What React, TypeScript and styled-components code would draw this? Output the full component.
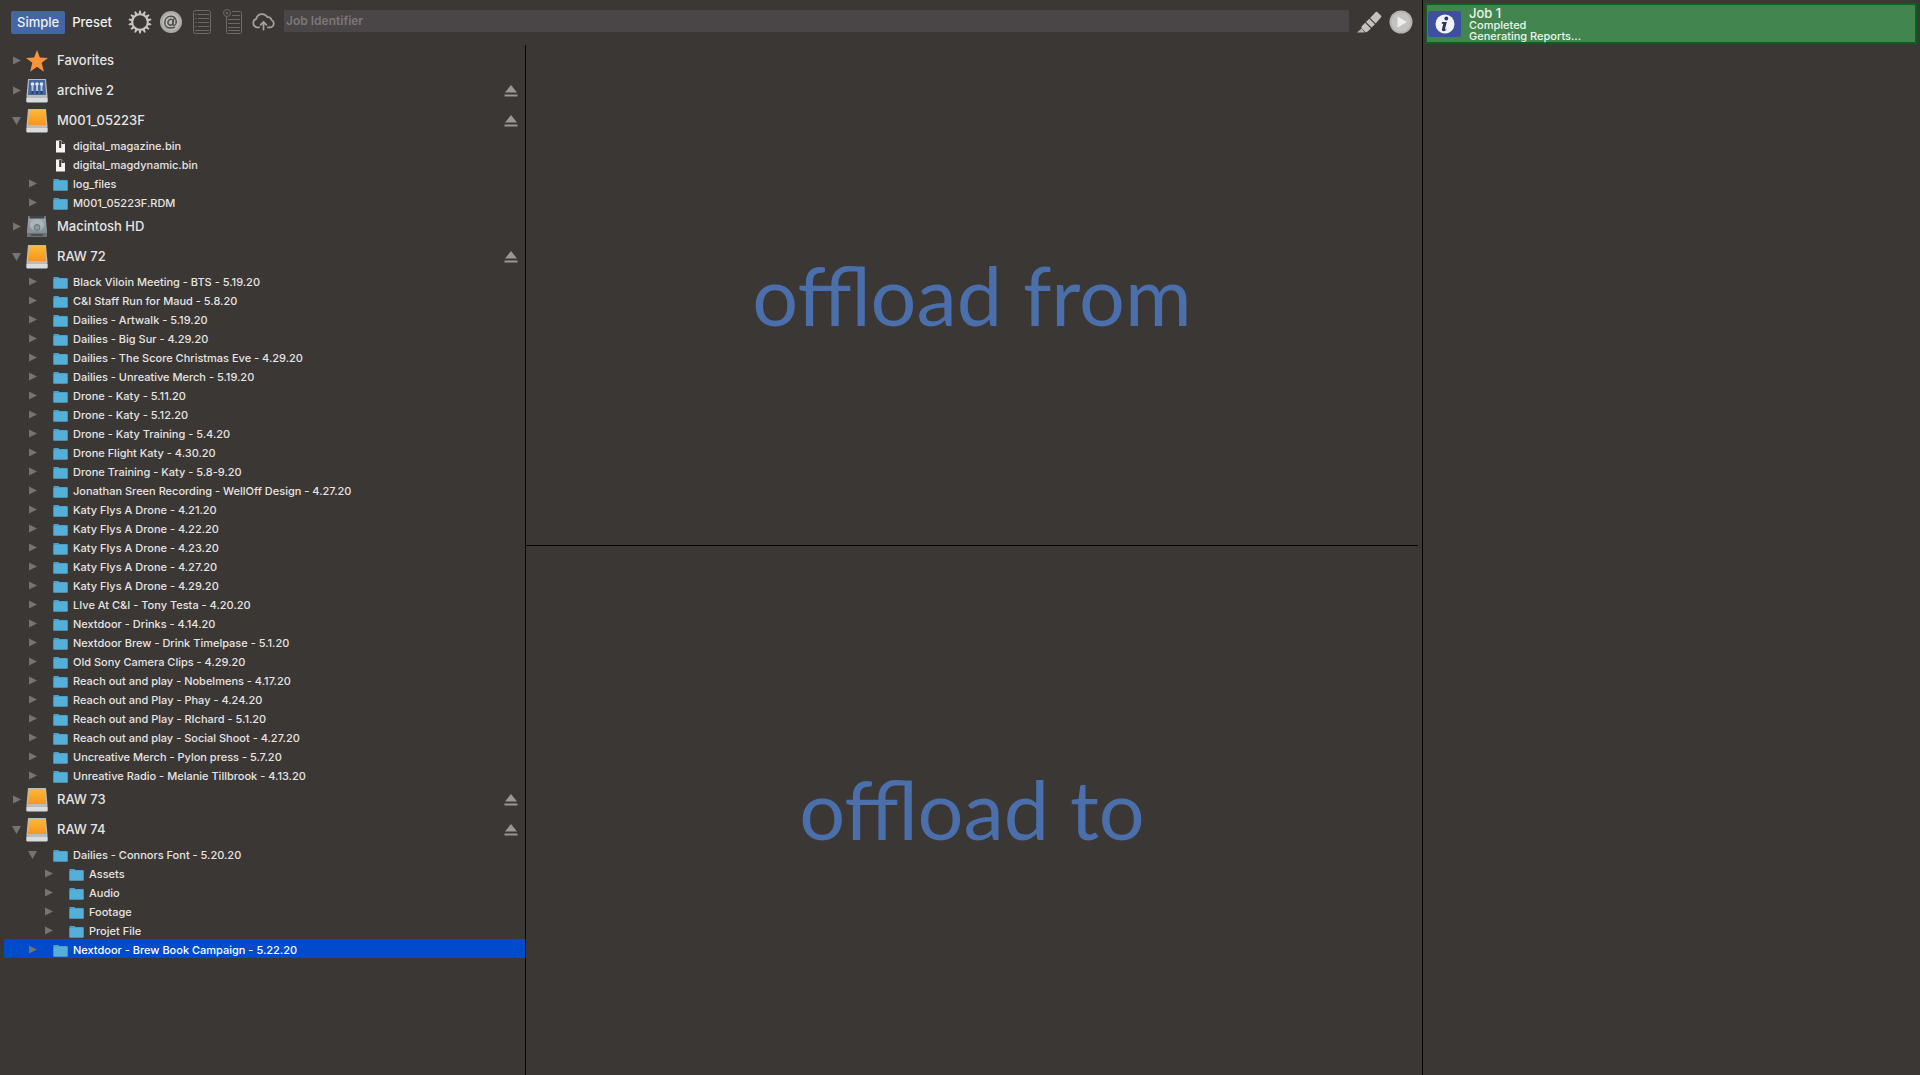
import React, { useState } from "react";
import styled, { createGlobalStyle, css } from "styled-components";

const GlobalStyle = createGlobalStyle`
  *, *::before, *::after { box-sizing: border-box; }
  html, body, #root { height: 100%; }
  body {
    margin: 0;
    background: #3b3735;
    color: #e6e4e3;
    font-family: Inter, "Liberation Sans", sans-serif;
    font-size: 11px;
  }
  button { font: inherit; color: inherit; border: 0; padding: 0; background: none; cursor: pointer; }
  ul { list-style: none; margin: 0; padding: 0; }
`;

const Window = styled.div`
  display: flex;
  min-height: 100vh;
`;

const Workspace = styled.main`
  flex: 1;
  min-width: 0;
  display: flex;
  flex-direction: column;
`;

const Toolbar = styled.header`
  display: flex;
  align-items: center;
  height: 45px;
  padding: 0 9px 1px 11px;
`;

const Tab = styled.button<{ $active?: boolean }>`
  height: 23px;
  padding: 0 7px;
  border-radius: 2px;
  font-size: 13px;
  font-weight: 500;
  line-height: 23px;
  color: #f0efee;
  ${(p) =>
    p.$active &&
    css`
      padding: 0 6px;
      background: #4466a6;
    `}
`;

const Tools = styled.div`
  display: flex;
  align-items: center;
  gap: 6px;
  margin: 0 8px;
`;

const ToolButton = styled.button`
  display: flex;
  align-items: center;
  justify-content: center;
  width: 25px;
  height: 26px;
`;

const JobInput = styled.input`
  flex: 1;
  min-width: 0;
  height: 22px;
  margin: 0 8px 2px 0;
  padding: 0 2px 2px;
  border: 0;
  border-radius: 0;
  outline: 0;
  background: #4a4647;
  color: #e6e4e3;
  font: 600 12px/20px Inter, "Liberation Sans", sans-serif;
  &::placeholder { color: #7b7778; opacity: 1; }
`;

const RunTools = styled.div`
  display: flex;
  align-items: center;
  gap: 6px;
`;

const Body = styled.div`
  flex: 1;
  display: flex;
  min-height: 0;
`;

const Sidebar = styled.nav`
  flex: none;
  width: 526px;
  padding-left: 4px;
  border-right: 1px solid #050505;
`;

const Row = styled.div<{ $depth: number; $selected?: boolean }>`
  display: flex;
  align-items: center;
  height: ${(p) => (p.$depth === 0 ? 30 : 19)}px;
  padding-top: 2px;
  padding-left: ${(p) => 7 + p.$depth * 16}px;
  padding-right: 7px;
  font-size: ${(p) => (p.$depth === 0 ? 13 : 11)}px;
  font-weight: 500;
  line-height: 16px;
  white-space: nowrap;
  ${(p) =>
    p.$selected &&
    css`
      background: #004bcb;
      color: #fff;
    `}
`;

const Disclosure = styled.button`
  display: flex;
  align-items: center;
  justify-content: center;
  width: 10px;
  height: 16px;
`;

const DisclosureSpace = styled.span`
  width: 10px;
`;

const IconCell = styled.span<{ $depth: number }>`
  display: flex;
  align-items: center;
  justify-content: center;
  width: ${(p) => (p.$depth === 0 ? 22 : 16)}px;
  margin: ${(p) => (p.$depth === 0 ? "0 9px 0 5px" : "2px 5px 0 15px")};
`;

const Label = styled.span<{ $depth: number }>`
  flex: 1;
  padding-bottom: ${(p) => (p.$depth === 0 ? 2 : 0)}px;
`;

const EjectButton = styled.button`
  display: flex;
  width: 14px;
  height: 14px;
`;

const Drops = styled.div`
  flex: 1;
  display: flex;
  flex-direction: column;
  padding-right: 4px;
`;

const DropZone = styled.section`
  flex: 1 1 0;
  display: flex;
  align-items: center;
  justify-content: center;
  & + & {
    flex-grow: 1.05;
    padding-bottom: 4px;
    border-top: 1px solid #050505;
  }
`;

const DropTitle = styled.h2`
  margin: 0;
  color: #4a6fab;
  font-family: Lato, "Open Sans", sans-serif;
  font-size: 81px;
  font-weight: 400;
  line-height: 96px;
  white-space: nowrap;
`;

const Jobs = styled.aside`
  flex: none;
  width: 498px;
  padding: 3px 3px 0 2px;
  border-left: 1px solid #050505;
`;

const JobCard = styled.article`
  display: flex;
  align-items: center;
  height: 41px;
  padding-left: 1px;
  border: 2px solid #0c5f1e;
  background: #43854f;
  color: #eaf5ea;
`;

const JobText = styled.div`
  margin-left: 8px;
  font-weight: 500;
`;

const JobName = styled.h3`
  margin: 0;
  font-size: 13px;
  font-weight: 500;
  line-height: 14px;
`;

const JobLine = styled.p`
  margin: 0;
  font-size: 11px;
  line-height: 11px;
`;

const GearIcon = () => (
  <svg width="24" height="24" viewBox="-12 -12 24 24">
    <circle r="7.8" fill="none" stroke="#c9c7c6" strokeWidth="2" />
    {Array.from({ length: 14 }, (_, i) => (
      <path key={i} d="M-1.4 -8.2L-.7 -11.6H.7L1.4 -8.2Z" fill="#c9c7c6" transform={`rotate(${(i * 360) / 14})`} />
    ))}
  </svg>
);

const AtIcon = () => (
  <svg width="24" height="24" viewBox="0 0 24 24">
    <circle cx="12" cy="12" r="11" fill="#aaa9a5" />
    <circle cx="12" cy="12" r="8.5" fill="#bdbcb8" />
    <g fill="none" stroke="#514e4c" strokeWidth="1.4" strokeLinecap="round">
      <ellipse cx="11.6" cy="12.2" rx="2.5" ry="3" transform="rotate(20 11.6 12.2)" />
      <path d="M14.8 9l-1 5.2c-.2 1.5 2 1.4 3-.2 1.500-3-.2-7.800-4.800-7.800-4 0-6.200 3-6.200 6.200 0 3.500 2.500 5.600 6 5.600 1.500 0 2.700-.3 3.700-.9" />
    </g>
  </svg>
);

const SheetIcon = () => (
  <svg width="20" height="26" viewBox="0 0 20 26" fill="none" stroke="#6d6967" strokeWidth="1">
    <rect x="1.500" y="1.500" width="17" height="23" rx="2" />
    <path d="M3 5.500h1.500M6 5.500h11M3 9.500h1.500M6 9.500h11M3 13.500h1.500M6 13.500h11M3 17.500h1.500M6 17.500h11M3 21.500h14" />
  </svg>
);

const ScrollIcon = () => (
  <svg width="20" height="26" viewBox="0 0 20 26" fill="none" stroke="#6d6967" strokeWidth="1">
    <path d="M9 2.500h8.500a1 1 0 0 1 1 1v20a1 1 0 0 1-1 1h-13a1 1 0 0 1-1-1V8" />
    <circle cx="4" cy="4" r="3.500" />
    <circle cx="4" cy="4" r="1" />
    <path d="M9 6.500h8M5 10.500h12M5 14.500h12M5 18.500h12M5 21.500h12" />
  </svg>
);

const CloudIcon = () => (
  <svg width="26" height="20" viewBox="0 0 26 20" fill="none" stroke="#a3a09f" strokeWidth="1.800" strokeLinecap="round" strokeLinejoin="round">
    <path d="M8.500 15.500H6A4.500 4.500 0 0 1 5.500 6.800 6.200 6.200 0 0 1 17 5a4 4 0 0 1 4.400 3A4 4 0 0 1 20.500 15.500H17.500" />
    <path d="M13 18V10.500M10 13l3-3.200L16 13" />
  </svg>
);

const BrushIcon = () => (
  <svg width="25" height="24" viewBox="0 0 25 24">
    <path d="M0 22.500h8L4.500 18.500z" fill="#b5b3b2" />
    <path d="M5 16l3.200-3.200 5.600 5.600-3.200 3.200c-1 .8-2 .8-2.800 0L5 18.800c-.8-1-.8-2 0-2.800z" fill="#c4c2c1" />
    <path d="M9 12l3.300-3.300 5.600 5.600-3.300 3.300z" fill="#c4c2c1" />
    <path d="M13.100 7.900L18.500 2.200c.7-.6 1.400-.6 2 0l3.400 3.400c.6.600.6 1.300 0 2l-5.200 5.900z" fill="#c4c2c1" />
  </svg>
);

const PlayIcon = () => (
  <svg width="24" height="24" viewBox="0 0 24 24">
    <circle cx="12" cy="12" r="11.500" fill="#b5b4b3" />
    <circle cx="12" cy="12" r="9.500" fill="#c3c2c1" />
    <path d="M8.500 6.500v11L18 12z" fill="#eeeded" />
  </svg>
);

const InfoIcon = () => (
  <svg width="33" height="26" viewBox="0 0 33 26">
    <rect width="33" height="26" rx="2" fill="#3f4f9f" />
    <circle cx="17" cy="13" r="9.500" fill="#f2f3f7" />
    <circle cx="18.300" cy="7.500" r="1.900" fill="#2c3566" />
    <path d="M14 11h4.800l-1.800 7c0 .8.800.5 1.800-.4-.6 1.700-1.700 2.600-3.200 2.600-1.400 0-2-.9-1.600-2.200l1.300-5.200h-1.600z" fill="#2c3566" />
  </svg>
);

const Triangle = ({ open }: { open?: boolean }) => (
  <svg width="10" height="10" viewBox="0 0 10 10" fill="#767372">
    <path d={open ? "M1 1h9L5.500 9z" : "M2 .5v8L10 4.500z"} />
  </svg>
);

const EjectIcon = () => (
  <svg width="14" height="14" viewBox="0 0 14 14" fill="#9a9796">
    <path d="M7 1l6 7.500H1z" />
    <path d="M.5 10.500h13v2H.5z" />
  </svg>
);

const StarIcon = () => (
  <svg width="24" height="24" viewBox="0 0 24 24">
    <path d="M12 0l3.100 8.200 8.900.4-6.900 5.400 2.400 9.600L12 18.400l-7.500 5.200L6.900 14 0 8.600l8.900-.4z" fill="#fb923c" />
  </svg>
);

type DriveKind = "external" | "server" | "internal";

const DriveIcon = ({ kind }: { kind: DriveKind }) => (
  <svg width="22" height="24" viewBox="0 0 22 24">
    <defs>
      <linearGradient id="driveOrange" x1="0" y1="0" x2="0" y2="1">
        <stop offset="0" stopColor="#fbb83a" />
        <stop offset="1" stopColor="#f7951d" />
      </linearGradient>
      <linearGradient id="driveSteel" x1="0" y1="0" x2="0" y2="1">
        <stop offset="0" stopColor="#9fabae" />
        <stop offset="1" stopColor="#7b878a" />
      </linearGradient>
    </defs>
    {kind === "internal" ? (
      <>
        <path d="M2.500 1h17L21 16v6H1v-6z" fill="url(#driveSteel)" />
        <path d="M3.500 1h15v2.500h-15z" fill="#3e4446" />
        <ellipse cx="11" cy="10" rx="7" ry="6" fill="#a9b5b8" />
        <circle cx="11" cy="12.500" r="3" fill="#8a979b" stroke="#66716f" />
        <path d="M1 18h20v4H1z" fill="#687376" />
        <path d="M5 20h12" stroke="#4a5153" strokeWidth="2" />
      </>
    ) : (
      <>
        <path d="M2 0h18l1.500 17v6H.5v-6z" fill="#b9bcbe" />
        <path d="M.5 19h21v3.500a1 1 0 0 1-1 1h-19a1 1 0 0 1-1-1z" fill="#d9dbdc" />
        {kind === "external" ? (
          <path d="M3 1h16l1 15H2z" fill="url(#driveOrange)" />
        ) : (
          <>
            <path d="M3 1h16l1 15H2z" fill="#46679b" />
            <path d="M6.500 15V8M11 15V8M15.500 15V8" stroke="#2b416b" strokeWidth="2" />
            <circle cx="6.500" cy="5" r="1.800" fill="#dce8f5" />
            <circle cx="11" cy="5" r="1.800" fill="#dce8f5" />
            <circle cx="15.500" cy="5" r="1.800" fill="#dce8f5" />
            <path d="M6.500 6v6M11 6v6M15.500 6v6" stroke="#b6cbe4" strokeWidth="2" />
          </>
        )}
      </>
    )}
  </svg>
);

const FolderIcon = () => (
  <svg width="15" height="13" viewBox="0 0 15 13">
    <path d="M.5 1h5L6.500 2h8v10.500H.5z" fill="#4b9fc8" />
    <path d="M.5 3h14v9.500H.5z" fill="#55b0d9" />
  </svg>
);

const FileIcon = () => (
  <svg width="11" height="13" viewBox="0 0 11 13">
    <path d="M1 .5h5.500L10 4v8.500H1z" fill="#f4f4f4" />
    <path d="M6.500 .5V4H10z" fill="#3b3735" />
    <path d="M4.200 1h2v7h-2z" fill="#3b3735" />
  </svg>
);

type Kind = DriveKind | "star" | "folder" | "file";

interface Node {
  name: string;
  kind: Kind;
  eject?: boolean;
  open?: boolean;
  selected?: boolean;
  children?: Node[];
}

const folder = (name: string): Node => ({ name, kind: "folder" });

const TREE: Node[] = [
  { name: "Favorites", kind: "star" },
  { name: "archive 2", kind: "server", eject: true },
  {
    name: "M001_05223F",
    kind: "external",
    eject: true,
    open: true,
    children: [
      { name: "digital_magazine.bin", kind: "file" },
      { name: "digital_magdynamic.bin", kind: "file" },
      folder("log_files"),
      folder("M001_05223F.RDM"),
    ],
  },
  { name: "Macintosh HD", kind: "internal" },
  {
    name: "RAW 72",
    kind: "external",
    eject: true,
    open: true,
    children: [
      "Black Viloin Meeting - BTS - 5.19.20",
      "C&I Staff Run for Maud - 5.8.20",
      "Dailies - Artwalk - 5.19.20",
      "Dailies - Big Sur - 4.29.20",
      "Dailies - The Score Christmas Eve - 4.29.20",
      "Dailies - Unreative Merch - 5.19.20",
      "Drone - Katy - 5.11.20",
      "Drone - Katy - 5.12.20",
      "Drone - Katy Training - 5.4.20",
      "Drone Flight Katy - 4.30.20",
      "Drone Training - Katy - 5.8-9.20",
      "Jonathan Sreen Recording - WellOff Design - 4.27.20",
      "Katy Flys A Drone - 4.21.20",
      "Katy Flys A Drone - 4.22.20",
      "Katy Flys A Drone - 4.23.20",
      "Katy Flys A Drone - 4.27.20",
      "Katy Flys A Drone - 4.29.20",
      "LIve At C&I - Tony Testa - 4.20.20",
      "Nextdoor - Drinks - 4.14.20",
      "Nextdoor Brew - Drink Timelpase - 5.1.20",
      "Old Sony Camera Clips - 4.29.20",
      "Reach out and play - Nobelmens - 4.17.20",
      "Reach out and Play - Phay - 4.24.20",
      "Reach out and Play - RIchard - 5.1.20",
      "Reach out and play - Social Shoot - 4.27.20",
      "Uncreative Merch - Pylon press - 5.7.20",
      "Unreative Radio - Melanie Tillbrook - 4.13.20",
    ].map(folder),
  },
  { name: "RAW 73", kind: "external", eject: true },
  {
    name: "RAW 74",
    kind: "external",
    eject: true,
    open: true,
    children: [
      {
        name: "Dailies - Connors Font - 5.20.20",
        kind: "folder",
        open: true,
        children: ["Assets", "Audio", "Footage", "Projet File"].map(folder),
      },
      { name: "Nextdoor - Brew Book Campaign - 5.22.20", kind: "folder", selected: true },
    ],
  },
];

const NodeIcon = ({ kind }: { kind: Kind }) => {
  if (kind === "star") return <StarIcon />;
  if (kind === "folder") return <FolderIcon />;
  if (kind === "file") return <FileIcon />;
  return <DriveIcon kind={kind} />;
};

const TreeItem = ({ node, depth }: { node: Node; depth: number }) => {
  const [open, setOpen] = useState(!!node.open);
  return (
    <li>
      <Row $depth={depth} $selected={node.selected}>
        {node.kind === "file" ? (
          <DisclosureSpace />
        ) : (
          <Disclosure aria-label={node.name} aria-expanded={open} onClick={() => setOpen(!open)}>
            <Triangle open={open} />
          </Disclosure>
        )}
        <IconCell $depth={depth}>
          <NodeIcon kind={node.kind} />
        </IconCell>
        <Label $depth={depth}>{node.name}</Label>
        {node.eject && (
          <EjectButton aria-label={`Eject ${node.name}`}>
            <EjectIcon />
          </EjectButton>
        )}
      </Row>
      {open && node.children && (
        <ul>
          {node.children.map((child) => (
            <TreeItem key={child.name} node={child} depth={depth + 1} />
          ))}
        </ul>
      )}
    </li>
  );
};

export default function App() {
  const [mode, setMode] = useState("Simple");
  const [job, setJob] = useState("");
  return (
    <>
      <GlobalStyle />
      <Window>
        <Workspace>
          <Toolbar>
            {["Simple", "Preset"].map((name) => (
              <Tab key={name} $active={mode === name} onClick={() => setMode(name)}>
                {name}
              </Tab>
            ))}
            <Tools>
              <ToolButton aria-label="Settings"><GearIcon /></ToolButton>
              <ToolButton aria-label="Email"><AtIcon /></ToolButton>
              <ToolButton aria-label="Report"><SheetIcon /></ToolButton>
              <ToolButton aria-label="Script"><ScrollIcon /></ToolButton>
              <ToolButton aria-label="Upload"><CloudIcon /></ToolButton>
            </Tools>
            <JobInput
              aria-label="Job Identifier"
              placeholder="Job Identifier"
              value={job}
              onChange={(e) => setJob(e.target.value)}
            />
            <RunTools>
              <ToolButton aria-label="Clear"><BrushIcon /></ToolButton>
              <ToolButton aria-label="Start"><PlayIcon /></ToolButton>
            </RunTools>
          </Toolbar>
          <Body>
            <Sidebar aria-label="Volumes">
              <ul>
                {TREE.map((node) => (
                  <TreeItem key={node.name} node={node} depth={0} />
                ))}
              </ul>
            </Sidebar>
            <Drops>
              <DropZone><DropTitle>offload from</DropTitle></DropZone>
              <DropZone><DropTitle>offload to</DropTitle></DropZone>
            </Drops>
          </Body>
        </Workspace>
        <Jobs aria-label="Jobs">
          <JobCard>
            <InfoIcon />
            <JobText>
              <JobName>Job 1</JobName>
              <JobLine>Completed</JobLine>
              <JobLine>Generating Reports...</JobLine>
            </JobText>
          </JobCard>
        </Jobs>
      </Window>
    </>
  );
}
